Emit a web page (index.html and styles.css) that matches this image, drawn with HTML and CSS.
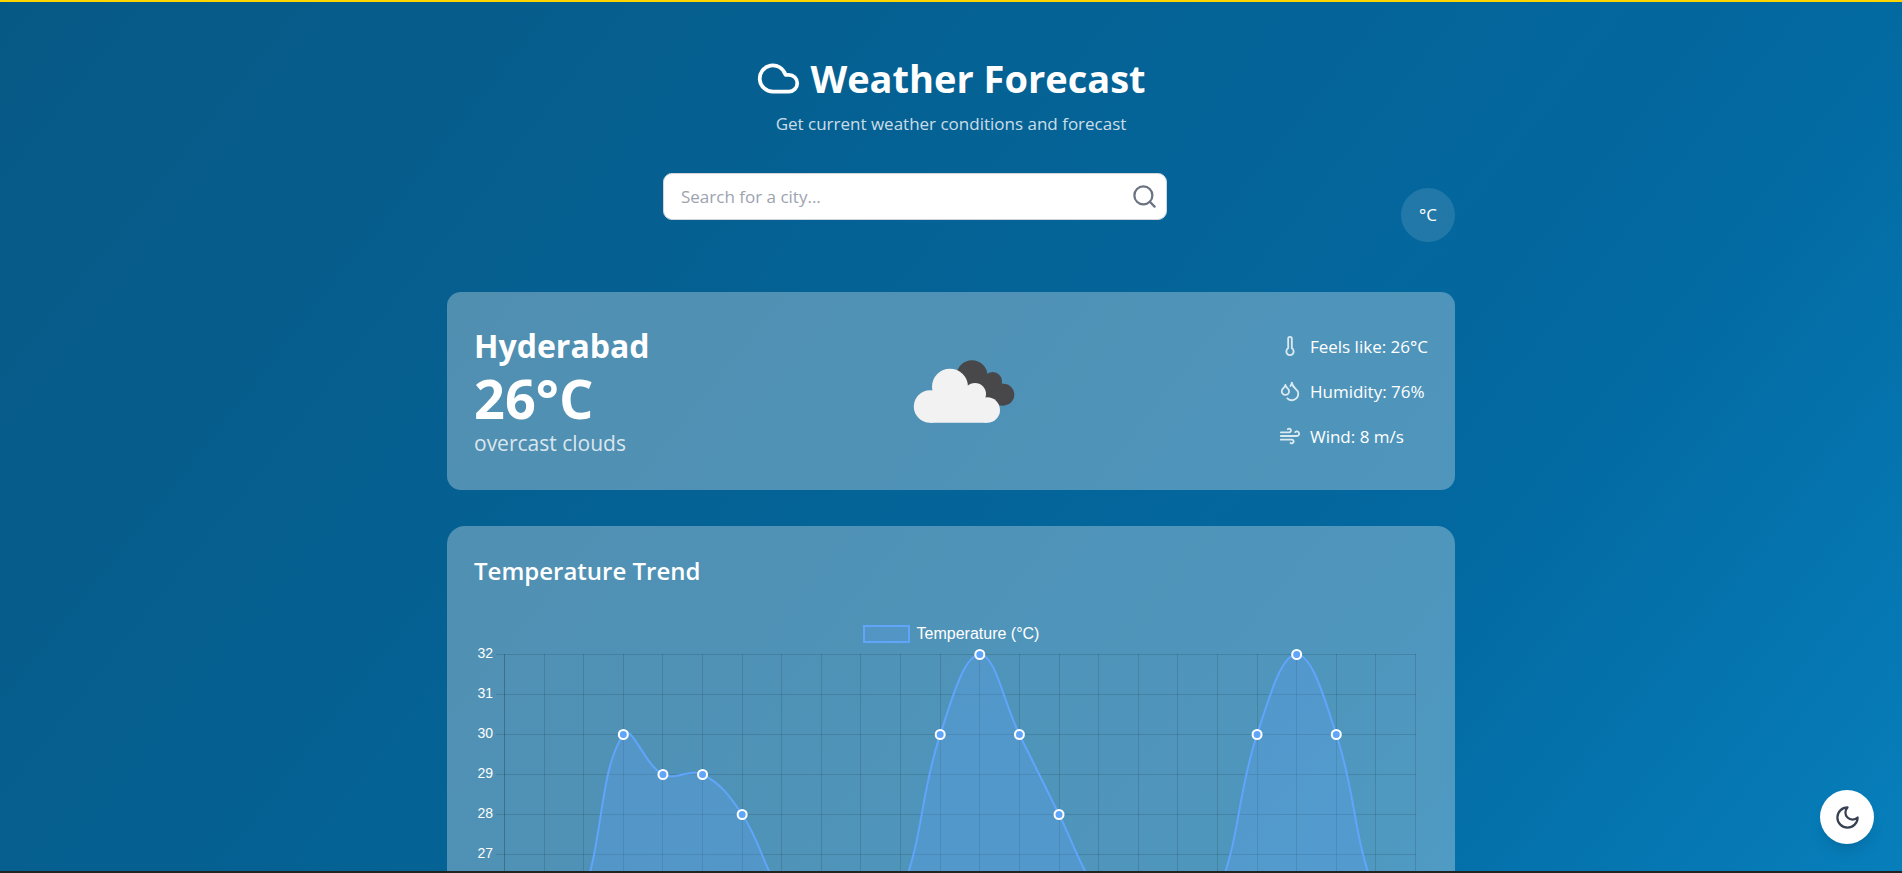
FILE: index.html
```
<!DOCTYPE html>
<html lang="en">
<head>
    <meta charset="UTF-8">
    <meta name="viewport" content="width=device-width, initial-scale=1.0">
    <title>Weather Forecast</title>
    <link rel="stylesheet" href="styles.css">
</head>
<body>
<div class="page">
    <div class="container">
        <header class="header">
            <h1>
                <svg class="icon logo" viewBox="0 0 24 24"><path d="M17.5 19H9a7 7 0 1 1 6.71-9h1.79a4.5 4.5 0 1 1 0 9Z"/></svg>
                Weather Forecast
            </h1>
            <p>Get current weather conditions and forecast</p>
        </header>

        <div class="toolbar">
            <form class="search" onsubmit="return false">
                <input type="text" placeholder="Search for a city..." aria-label="Search for a city">
                <button type="submit" aria-label="Search">
                    <svg class="icon" viewBox="0 0 24 24"><circle cx="11" cy="11" r="8"/><path d="m21 21-4.3-4.3"/></svg>
                </button>
            </form>
            <button type="button" class="unit">°C</button>
        </div>

        <section class="card current">
            <div class="summary">
                <h2>Hyderabad</h2>
                <p class="temp">26°C</p>
                <p class="desc">overcast clouds</p>
            </div>
            <svg class="condition" viewBox="0 0 144 144">
                <g fill="#48484a">
                    <circle cx="80" cy="56.7" r="15.5"/>
                    <circle cx="100.7" cy="62.3" r="9.3"/>
                    <circle cx="111.5" cy="75.6" r="10.8"/>
                    <path d="M80 56h20l12 10v20.4H80z"/>
                </g>
                <g fill="#f2f2f2">
                    <circle cx="38" cy="87.5" r="16.2"/>
                    <circle cx="58" cy="67.7" r="18"/>
                    <circle cx="83" cy="75" r="11"/>
                    <circle cx="95.3" cy="91" r="12.7"/>
                    <path d="M38 80l20-12h25l10 12 2.300 23.700H38z"/>
                </g>
            </svg>
            <ul class="details">
                <li>
                    <svg class="icon" viewBox="0 0 24 24"><path d="M14 4v10.54a4 4 0 1 1-4 0V4a2 2 0 0 1 4 0Z"/></svg>
                    <span>Feels like: 26°C</span>
                </li>
                <li>
                    <svg class="icon" viewBox="0 0 24 24"><path d="M7 16.3c2.2 0 4-1.83 4-4.05 0-1.16-.57-2.26-1.71-3.19S7.29 6.75 7 5.3c-.29 1.45-1.14 2.84-2.29 3.76S3 11.1 3 12.25c0 2.22 1.8 4.05 4 4.05z"/><path d="M12.56 6.6A10.97 10.97 0 0 0 14 3.02c.5 2.5 2 4.9 4 6.5s3 3.5 3 5.5a6.98 6.98 0 0 1-11.91 4.97"/></svg>
                    <span>Humidity: 76%</span>
                </li>
                <li>
                    <svg class="icon" viewBox="0 0 24 24"><path d="M17.7 7.7a2.5 2.5 0 1 1 1.8 4.3H2"/><path d="M9.6 4.6A2 2 0 1 1 11 8H2"/><path d="M12.6 19.4A2 2 0 1 0 14 16H2"/></svg>
                    <span>Wind: 8 m/s</span>
                </li>
            </ul>
        </section>

        <section class="card trend">
            <h2>Temperature Trend</h2>
            <div class="legend"><i></i>Temperature (°C)</div>
            <svg id="chart" class="chart"></svg>
        </section>
    </div>
</div>

<button type="button" class="theme" aria-label="Toggle dark mode">
    <svg class="icon" viewBox="0 0 24 24"><path d="M12 3a6 6 0 0 0 9 9 9 9 0 1 1-9-9Z"/></svg>
</button>

<script>

// hourly temperatures
let temps = [24, 24, 26, 30, 29, 29, 28, 26, 25, 25, 26, 30, 32, 30, 28, 26, 25, 25, 26, 30, 32, 30, 26, 25];

// labelled values on the y axis
let ticks = [32, 31, 30, 29, 28, 27];

const MAX = 32;
const MIN = 24;
const STEP = 40;
const TENSION = 0.4;
const area = { left: 30, top: 11, right: 13 };

let chart = document.querySelector("#chart");

// control points on both sides of a point
let controls = (prev, cur, next) => {
    let d1 = Math.hypot(cur.x - prev.x, cur.y - prev.y);
    let d2 = Math.hypot(next.x - cur.x, next.y - cur.y);
    let a = TENSION * d1 / (d1 + d2 || 1);
    let b = TENSION * d2 / (d1 + d2 || 1);
    let dx = next.x - prev.x;
    let dy = next.y - prev.y;
    return {
        before: `${cur.x - a * dx} ${cur.y - a * dy}`,
        after: `${cur.x + b * dx} ${cur.y + b * dy}`
    };
}

let toY = t => area.top + (MAX - t) * STEP;

let render = () => {
    let right = chart.clientWidth - area.right;
    let bottom = toY(MIN);
    let gap = (right - area.left) / (temps.length - 1);
    let points = temps.map((t, i) => ({ x: area.left + i * gap, y: toY(t) }));

    let grid = "";
    for (let t = MAX; t >= MIN; t--) {
        grid += `<path d="M${area.left - 8} ${toY(t) + 0.5}H${right + 1}"/>`;
    }
    points.forEach(p => {
        grid += `<path d="M${Math.round(p.x) + 0.5} ${area.top}V${bottom + 8}"/>`;
    });
    // y axis border
    grid += `<path d="M${area.left + 0.5} ${area.top}V${bottom}"/>`;

    let ctrl = points.map((p, i) => controls(points[i - 1] || p, p, points[i + 1] || p));
    let line = `M${points[0].x} ${points[0].y}`;
    for (let i = 1; i < points.length; i++) {
        line += `C${ctrl[i - 1].after} ${ctrl[i].before} ${points[i].x} ${points[i].y}`;
    }

    chart.innerHTML = `
        <g class="grid">${grid}</g>
        <g class="labels">
            ${ticks.map(t => `<text x="${area.left - 11}" y="${toY(t) + 4}">${t}</text>`).join('')}
        </g>
        <g transform="translate(0.5 0.5)">
            <path class="fill" d="${line}V${bottom}H${area.left}Z"/>
            <path class="line" d="${line}"/>
            ${points.map(p => `<circle cx="${p.x}" cy="${p.y}" r="4.5"/>`).join('')}
        </g>
    `;
}

window.onload = render;
window.onresize = render;

</script>
</body>
</html>
```
FILE: styles.css
```
* {
    margin: 0;
    padding: 0;
    box-sizing: border-box;
}

body {
    font-family: "Open Sans", sans-serif;
    font-size: 17px;
    line-height: 27px;
    color: #fff;
}

button,
input {
    font: inherit;
    border: none;
}

button {
    cursor: pointer;
}

.icon {
    display: block;
    flex-shrink: 0;
    fill: none;
    stroke: currentColor;
    stroke-width: 2;
    stroke-linecap: round;
    stroke-linejoin: round;
}

.page {
    height: 100vh;
    overflow-y: auto;
    scrollbar-width: none;
    border-top: 2px solid #ffd500;
    border-bottom: 2px solid #222;
    background: linear-gradient(to bottom right, #075985, #0369a1, #0ea5e9) 0 0 / 100% 2400px no-repeat;
}

.container {
    max-width: 1044px;
    margin: 0 auto;
    padding: 54px 18px 36px;
}

.header {
    margin-bottom: 36px;
    text-align: center;
}

.header h1 {
    display: flex;
    align-items: center;
    justify-content: center;
    gap: 9px;
    margin-bottom: 9px;
    font-size: 38px;
    line-height: 45px;
}

.logo {
    width: 45px;
    height: 45px;
}

.header p {
    color: rgba(255, 255, 255, .8);
}

.toolbar {
    display: flex;
    align-items: center;
    gap: 18px;
    margin-bottom: 36px;
}

.search {
    flex: 1;
    display: flex;
    align-items: center;
    max-width: 504px;
    margin: 0 auto 36px;
    padding: 0 8px 0 17px;
    border: 1px solid #d1d5db;
    border-radius: 9px;
    background: #fff;
}

.search input {
    flex: 1;
    min-width: 0;
    height: 45px;
    outline: none;
    background: none;
    color: #1f2937;
}

.search input::placeholder {
    color: #9ca3af;
}

.search button {
    background: none;
    color: #6b7280;
}

.search .icon {
    width: 27px;
    height: 27px;
}

.unit {
    width: 54px;
    height: 54px;
    border-radius: 50%;
    background: rgba(255, 255, 255, .12);
    color: #fff;
}

.card {
    margin-bottom: 36px;
    padding: 27px;
    border-radius: 18px;
    background: rgba(255, 255, 255, .3);
}

.current {
    display: flex;
    align-items: center;
    justify-content: space-between;
    border-radius: 14px;
}

.summary h2 {
    font-size: 32px;
    line-height: 44px;
}

.temp {
    font-size: 54px;
    font-weight: 700;
    line-height: 60px;
}

.desc {
    font-size: 21px;
    line-height: 30px;
    color: rgba(255, 255, 255, .8);
}

.condition {
    width: 144px;
    height: 144px;
}

.details {
    display: flex;
    flex-direction: column;
    gap: 18px;
    list-style: none;
}

.details li {
    display: flex;
    align-items: center;
    gap: 9px;
}

.details .icon {
    width: 22px;
    height: 22px;
    opacity: .8;
}

.trend h2 {
    margin-bottom: 18px;
    font-size: 24px;
    font-weight: 600;
    line-height: 36px;
}

.legend {
    display: flex;
    align-items: center;
    justify-content: center;
    gap: 7px;
    padding-top: 18px;
    font: 16px/18px "Liberation Sans", sans-serif;
}

.legend i {
    width: 47px;
    height: 18px;
    border: 2px solid #60a5fa;
    background: rgba(96, 165, 250, .2);
}

.chart {
    display: block;
    width: 100%;
    height: 340px;
}

.grid path {
    stroke: rgba(0, 0, 0, .12);
}

.labels text {
    fill: #fff;
    font: 14px "Liberation Sans", sans-serif;
    text-anchor: end;
}

.chart .fill {
    fill: rgba(96, 165, 250, .25);
}

.chart .line {
    fill: none;
    stroke: #60a5fa;
    stroke-width: 2;
}

.chart circle {
    fill: #60a5fa;
    stroke: #fff;
    stroke-width: 2;
}

.theme {
    position: fixed;
    right: 28px;
    bottom: 29px;
    display: flex;
    align-items: center;
    justify-content: center;
    width: 54px;
    height: 54px;
    border-radius: 50%;
    background: #fff;
    color: #374151;
    box-shadow: 0 10px 15px -3px rgba(0, 0, 0, .1), 0 4px 6px -4px rgba(0, 0, 0, .1);
}

.theme .icon {
    width: 27px;
    height: 27px;
}
```
